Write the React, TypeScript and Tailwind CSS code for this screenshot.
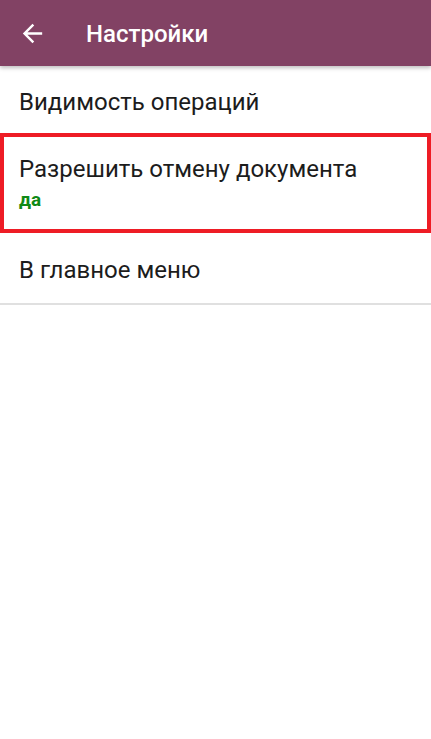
import React from "react";

export default function App() {
  return (
    <div className="w-[431px] h-[739px] bg-white flex flex-col" style={{ fontFamily: "Roboto, 'Noto Sans', sans-serif" }}>
      <div className="h-[66px] bg-[#824264] flex items-center shadow-[0_2px_4px_rgba(0,0,0,0.25)] relative z-10 shrink-0">
        <svg className="ml-[18px] w-[29px] h-[29px]" viewBox="0 0 24 24" fill="white">
          <path d="M20 11H7.83l5.59-5.59L12 4l-8 8 8 8 1.41-1.41L7.83 13H20v-2z" />
        </svg>
        <div className="ml-[39px] text-white text-[24px] leading-[32px] font-medium pt-[2px]">Настройки</div>
      </div>
      <div className="h-[67px] flex items-center pl-[19px] pt-[4px] text-[24px] leading-[28px] text-[#1c1c1c] shrink-0">
        Видимость операций
      </div>
      <div className="h-[100px] border-4 border-[#ee1c25] pl-[15px] pt-[18px] flex flex-col shrink-0">
        <div className="text-[24px] leading-[28px] text-[#1c1c1c]">Разрешить отмену документа</div>
        <div className="text-[19px] leading-[24px] font-bold text-[#0f8a16] mt-[5px]">да</div>
      </div>
      <div className="h-[70px] flex items-center pl-[19px] pt-[3px] text-[24px] leading-[28px] text-[#1c1c1c] shrink-0">
        В главное меню
      </div>
      <div className="h-[2px] bg-[#e0e0e0] shrink-0" />
    </div>
  );
}
